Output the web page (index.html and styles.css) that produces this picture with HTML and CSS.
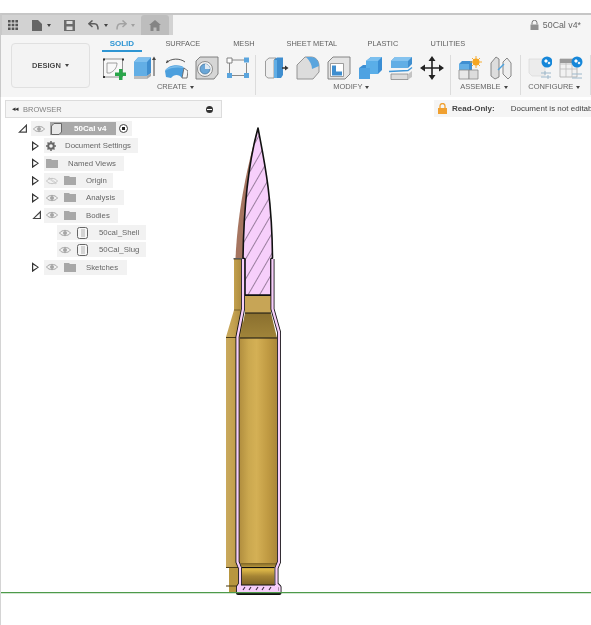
FILE: index.html
```html
<!DOCTYPE html>
<html lang="en">
<head>
<meta charset="utf-8">
<title>50Cal v4</title>
<link rel="stylesheet" href="styles.css">
</head>
<body>
<div class="app">
  <header class="topbar">
    <div class="qat">
      <svg class="qi grid" viewBox="0 0 10 10"><path d="M0 0h2.600v2.600H0zM3.700 0h2.600v2.600H3.700zM7.400 0H10v2.600H7.400zM0 3.700h2.600v2.600H0zM3.700 3.700h2.600v2.600H3.700zM7.400 3.700H10v2.600H7.400zM0 7.400h2.600V10H0zM3.700 7.400h2.600V10H3.700zM7.400 7.400H10V10H7.400z" fill="#555"/></svg>
      <svg class="qi file" viewBox="0 0 10 11"><path d="M0 0h6l4 4v7H0z" fill="#666"/></svg>
      <span class="caret dark file-caret"></span>
      <svg class="qi save" viewBox="0 0 11 11"><path d="M0 0h11v11H0z" fill="#6c6c6c"/><path d="M2.500 1h6v3h-6zM2.500 6.500h6V10h-6z" fill="#ddd"/></svg>
      <svg class="qi undo" viewBox="0 0 11 10"><path d="M4.500 0.500 0.800 3.800l3.700 3.200M1 3.800h5.500c2.500 0 3.500 2 3.500 5.700" fill="none" stroke="#5c5c5c" stroke-width="1.500"/></svg>
      <span class="caret dark undo-caret"></span>
      <svg class="qi redo" viewBox="0 0 11 10"><path d="M6.500 0.500l3.700 3.300L6.500 7M10 3.800H4.500C2 3.800 1 5.800 1 9.500" fill="none" stroke="#a2a2a2" stroke-width="1.500"/></svg>
      <span class="caret faint redo-caret"></span>
      <div class="home">
        <svg class="home-icon" viewBox="0 0 12 11"><path d="M6 0 0 5h1.500v6h3V7.500h3V11h3V5H12z" fill="#858585"/></svg>
      </div>
    </div>
    <div class="doc-tab">
      <svg class="lock" viewBox="0 0 9 10"><path d="M2 4.500V2.800a2.500 2.500 0 0 1 5 0v1.700" fill="none" stroke="#777"/><path d="M.5 4.500h8V10h-8z" fill="#909090"/></svg>
      <span class="doc-name">50Cal v4*</span>
    </div>
  </header>

  <section class="ribbon">
    <div class="design"><span>DESIGN</span><span class="caret dark"></span></div>
    <div class="panel">
      <nav class="tabs">
        <span class="tab active t40">SOLID</span>
        <span class="tab t82">SURFACE</span>
        <span class="tab t40">MESH</span>
        <span class="tab t96">SHEET METAL</span>
        <span class="tab t46">PLASTIC</span>
        <span class="tab t84">UTILITIES</span>
      </nav>
      <div class="groups">
        <div class="group g-create">
          <div class="tools">
            <svg class="tool" viewBox="0 0 24 24"><path d="M1.500 3h19v18h-19z" fill="#f8f8f8" stroke="#777" stroke-width=".8"/><path d="M5 7v10h3M5 7h10c0 5-3 8-7 10" fill="none" stroke="#888" stroke-width=".8"/><path d="M1 2.500h2v2H1zM20 2.500h2v2h-2zM1 20h2v2H1z" fill="#333"/><path d="M17 13h3.500v3.500H24v3.500h-3.500V24H17v-4h-4v-3.500h4z" fill="#2aa54a"/></svg>
            <svg class="tool" viewBox="0 0 24 24"><path d="M1 6 5 1.500h13V17l-4 3H1z" fill="#3f8ecf"/><path d="M1 6h13v14H1z" fill="#62aee5"/><path d="M1 6 5 1.500h13L14 6z" fill="#7fc0ee"/><path d="M1 20h13v3H1z" fill="#bdbdbd"/><path d="M14 20l4-3v3l-4 3z" fill="#a8a8a8"/><path d="M21 3v17" stroke="#444"/><path d="M21 .5l2 3.500h-4z" fill="#444"/></svg>
            <svg class="tool" viewBox="0 0 24 24"><path d="M1 15C4 8 18 8 20 12l-2 10c-3-4-8-4-11 0l-5-1z" fill="#4c9fdd"/><path d="M1 15C4 9 17 9 20 12c-5-1-14-1-19 3z" fill="#7cbdea"/><path d="M20 12l4 3-1 7-5 0z" fill="#f6f6f6" stroke="#555" stroke-width=".8"/><path d="M2 7C7 2 16 2 21 6" fill="none" stroke="#444" stroke-width=".9"/><path d="M2 7l1-3 2 2z" fill="#444"/></svg>
            <svg class="tool" viewBox="0 0 24 24"><path d="M1 5 5 1h18v17l-4 5H1z" fill="#d6d6d6" stroke="#777" stroke-width=".9"/><circle cx="10" cy="13" r="7.500" fill="#f2f2f2" stroke="#777" stroke-width=".8"/><circle cx="10" cy="13" r="5" fill="#6ba7d8" stroke="#3e6f96" stroke-width=".7"/><path d="M10 13V8a5 5 0 0 1 5 5z" fill="#dfe9f2"/></svg>
            <svg class="tool" viewBox="0 0 24 24"><path d="M6 4h12M3.500 7v10M6 19.500h12M20.500 7v10" stroke="#8a8a8a"/><path d="M1 2h5v5H1z" fill="#fff" stroke="#777" stroke-width=".9"/><path d="M18 1.500h5v5h-5zM1 17h5v5H1zM18 17h5v5h-5z" fill="#5aa5de"/></svg>
          </div>
          <div class="group-label">CREATE<span class="caret dark"></span></div>
        </div>
        <div class="group g-modify">
          <div class="tools">
            <svg class="tool" viewBox="0 0 24 24"><path d="M.5 5 4 2h7l-2 2v18H3l-2.500-2z" fill="#eee" stroke="#888" stroke-width=".8"/><path d="M9 4l3-2.500h6V19l-2 3H9z" fill="#3f8ecf"/><path d="M9 4h3v18H9z" fill="#62aee5"/><path d="M17 12h3" stroke="#333" stroke-width="1.500"/><path d="M20 9.500l3.500 2.500-3.500 2.500z" fill="#333"/></svg>
            <svg class="tool" viewBox="0 0 24 24"><path d="M1 23V9L9 1h6c5 0 8 4 8 9v6l-6 7z" fill="#dcdcdc" stroke="#8a8a8a" stroke-width=".9"/><path d="M10 1h5c5 0 8 4 8 9l-7 3c0-4-2-8-6-12z" fill="#5aa5de"/></svg>
            <svg class="tool" viewBox="0 0 24 24"><path d="M1 6 6 1h17v17l-5 5H1z" fill="#e4e4e4" stroke="#7a7a7a" stroke-width=".9"/><path d="M3.500 7.500h13v13h-13z" fill="#fff" stroke="#888" stroke-width=".8"/><path d="M5 9.500h4v6h6v4H5z" fill="#3f8ecf"/></svg>
            <svg class="tool" viewBox="0 0 24 24"><path d="M8 5l5-4h11v13l-4 4h-8v5H1V12l4-3h3z" fill="#3a8ed4"/><path d="M1 12h11v11H1z" fill="#4ea2e2"/><path d="M8 5h12v13h-8v-6H8z" fill="#5aaee8"/><path d="M8 5l5-4h11l-4 4z" fill="#7cc0ef"/></svg>
            <svg class="tool" viewBox="0 0 24 24"><path d="M2 5l4-4h17v7l-4 4H2z" fill="#3f8ecf"/><path d="M2 5h17v7H2z" fill="#62aee5"/><path d="M2 5l4-4h17l-4 4z" fill="#85c3ef"/><path d="M0 15.500 19 14.500l4-3" fill="none" stroke="#3f96d8" stroke-width="1.300"/><path d="M2 18h17v5.500H2z" fill="#dcdcdc" stroke="#888" stroke-width=".8"/><path d="M19 18l4-3v6l-4 2.500z" fill="#c4c4c4"/></svg>
            <svg class="tool" viewBox="0 0 24 24"><path d="M12 2v20M2 12h20" stroke="#222" stroke-width="1.600"/><path d="M12 0l3.500 5h-7zM12 24l-3.500-5h7zM0 12l5-3.500v7zM24 12l-5 3.500v-7z" fill="#222"/></svg>
          </div>
          <div class="group-label">MODIFY<span class="caret dark"></span></div>
        </div>
        <div class="group g-assemble">
          <div class="tools">
            <svg class="tool" viewBox="0 0 24 24"><path d="M1 8l3-3h10v9H1z" fill="#3f8fd2"/><path d="M1 8h10v6H1z" fill="#62aee5"/><path d="M1 14h10v9H1z" fill="#e8e8e8" stroke="#888" stroke-width=".8"/><path d="M11 14h9v9h-9z" fill="#dcdcdc" stroke="#888" stroke-width=".8"/><circle cx="18" cy="6" r="3.500" fill="#f5a623"/><path d="M18 0v12M12 6h12M14 2l8 8M22 2l-8 8" stroke="#f5a623" stroke-width=".9"/></svg>
            <svg class="tool" viewBox="0 0 24 24"><path d="M2 7 7 1l3 2v18l-4 2-4-3z" fill="#ddd" stroke="#7a7a7a" stroke-width=".9"/><path d="M14 6l4-4 4 5v13l-3 3-5-5z" fill="#eee" stroke="#7a7a7a" stroke-width=".9"/><path d="M9 14l6-6" stroke="#4da3e0" stroke-width="1.500"/></svg>
          </div>
          <div class="group-label">ASSEMBLE<span class="caret dark"></span></div>
        </div>
        <div class="group g-config">
          <div class="tools">
            <svg class="tool" viewBox="0 0 24 24"><path d="M1 3h16v17H4l-3-3z" fill="#ececec" stroke="#dadada" stroke-width=".7"/><path d="M13 17h10M13 21h10M17 15v4M20 19v4" stroke="#9db8cb"/><circle cx="19" cy="6" r="5.500" fill="#1687d9"/><path d="M18 3l2 2-2 2-2-2zM21 5.500l1.500 1.500-1.500 1.500-1.500-1.500z" fill="#fff"/></svg>
            <svg class="tool" viewBox="0 0 24 24"><path d="M1 3h17v18H1z" fill="#f2f2f2" stroke="#aaa" stroke-width=".8"/><path d="M1 8h17M1 13h17M7 3v18M13 3v18" stroke="#bbb" stroke-width=".8"/><path d="M1 3h15v4H1z" fill="#9a9a9a"/><path d="M13 18h10M13 22h10" stroke="#9db8cb"/><circle cx="18" cy="6" r="5.500" fill="#1687d9"/><path d="M17 3l2 2-2 2-2-2zM20 5.500l1.500 1.500-1.500 1.500-1.500-1.500z" fill="#fff"/></svg>
          </div>
          <div class="group-label">CONFIGURE<span class="caret dark"></span></div>
        </div>
      </div>
    </div>
  </section>

  <main class="canvas">
    <svg class="model" viewBox="0 0 591 625" aria-hidden="true">
      <defs>
        <linearGradient id="brass" x1="0" x2="1" y1="0" y2="0">
          <stop offset="0" stop-color="#b08d3e"/><stop offset=".25" stop-color="#cba84f"/><stop offset=".45" stop-color="#d4b055"/><stop offset=".75" stop-color="#c09a42"/><stop offset="1" stop-color="#a9853a"/>
        </linearGradient>
        <linearGradient id="outer" x1="0" x2="1" y1="0" y2="0">
          <stop offset="0" stop-color="#c9a95e"/><stop offset=".45" stop-color="#c4a14f"/><stop offset="1" stop-color="#a8883c"/>
        </linearGradient>
        <linearGradient id="shoulder" x1="0" x2="0" y1="0" y2="1">
          <stop offset="0" stop-color="#8a6f2e"/><stop offset="1" stop-color="#a0843a"/>
        </linearGradient>
        <linearGradient id="groove" x1="0" x2="0" y1="0" y2="1">
          <stop offset="0" stop-color="#7e6426"/><stop offset=".3" stop-color="#dcb748"/><stop offset=".6" stop-color="#a58434"/><stop offset="1" stop-color="#7e6426"/>
        </linearGradient>
        <pattern id="hatch" patternUnits="userSpaceOnUse" width="10" height="10" patternTransform="translate(2 0) rotate(30)">
          <rect width="10" height="10" fill="#f7cffb"/>
          <path d="M0 0V10" stroke="#4a3a50" stroke-width="1.100"/>
        </pattern>
      </defs>
      <path d="M258 128C249 160 238 205 235.500 258H243L258 140z" fill="#a67560"/>
      <path d="M234 259H243V338H237V568H226V337L234 310z" fill="url(#outer)"/>
      <path d="M229 568H240V586H229zM229 586H238V593H229z" fill="#b8963f"/>
      <path d="M233.500 258.800H243" stroke="#222" stroke-width="1.100"/>
      <path d="M234 310H240" stroke="#6f5a24" stroke-width=".9"/>
      <path d="M226 337.500H237M226 567.500H238M226 586H238" stroke="#4a3a14" stroke-width="1.100"/>
      <path d="M258 128C252 150 244 190 243 258L245 259V295H271V259L272.500 258C272 195 264 160 258 128z" fill="url(#hatch)" stroke="#111" stroke-width="1.600" stroke-linejoin="round"/>
      <path d="M245 295H271V313H245z" fill="#c7a556"/>
      <path d="M245 313H271L277 338H240z" fill="url(#shoulder)"/>
      <path d="M239 338H278V563H239z" fill="url(#brass)"/>
      <path d="M240 563H277L274.500 568V585H242V568z" fill="url(#groove)"/>
      <path d="M245 295.500H271M245 313H271M240 338H277M242 567.500H274.500" stroke="#111" stroke-width="1" fill="none"/>
      <path d="M243 259V309L237.500 337V562L240 568V584L238 587V593H279.500V587L276.500 584V568L279 562V332L272.500 309V259" fill="none" stroke="#111" stroke-width="4" stroke-linejoin="round"/>
      <path d="M243 259V309L237.500 337V562L240 568V584L238 587V592H279.500V587L276.500 584V568L279 562V332L272.500 309V259" fill="none" stroke="#f7cffb" stroke-width="2.300" stroke-linejoin="round"/>
      <path d="M239 585H278V592H239z" fill="#f7cffb"/>
      <path d="M241 585H275" stroke="#111" stroke-width="1.100"/>
      <path d="M243 590l2-3M249 590l2-3M256 590l2-3M262 590l2-3M269 590l2-3" stroke="#3b2a3e" stroke-width="1.100"/>
      <path d="M236.500 593.500H281" stroke="#111" stroke-width="1"/>
      <path d="M1 592.700H591" stroke="#4d9a4a" stroke-width="1.200"/>
    </svg>

    <div class="overlay-bar">
      <div class="browser-head">
        <span class="collapse">◂◂</span>
        <span class="browser-title">BROWSER</span>
        <span class="minus"></span>
      </div>
      <div class="readonly">
        <svg class="ro-lock" viewBox="0 0 9 11"><path d="M2 5V3a2.500 2.500 0 0 1 5 0v2" fill="none" stroke="#f0a030" stroke-width="1.300"/><path d="M0 5h9v6H0z" fill="#f0a030"/></svg>
        <b class="ro-title">Read-Only:</b>
        <span class="ro-text">Document is not editable</span>
      </div>
    </div>

    <ul class="tree">
      <li class="row root">
        <span class="tw open"></span>
        <span class="pill root-pill">
          <svg class="eye" viewBox="0 0 12 8"><path d="M.5 4C3 .5 9 .5 11.500 4 9 7.500 3 7.500.5 4z" fill="none" stroke="#a5a5a5"/><circle cx="6" cy="4" r="2" fill="#a5a5a5"/></svg>
          <span class="root-sel">
            <svg class="cube" viewBox="0 0 11 12"><path d="M.5 3 3 .5h7.500V9L8 11.500H.5z" fill="#e8e8e8" stroke="#666"/></svg>
            <b>50Cal v4</b>
          </span>
          <span class="radio"></span>
        </span>
      </li>
      <li class="row l1">
        <span class="tw closed"></span>
        <span class="pill docset">
          <svg class="gear" viewBox="0 0 10 10"><circle cx="5" cy="5" r="2.800" fill="none" stroke="#666" stroke-width="2"/><path d="M5 0v10M0 5h10M1.500 1.500l7 7M8.500 1.500l-7 7" stroke="#666" stroke-width="1.500" stroke-dasharray="1.800 6.400"/></svg>
          <span class="lbl">Document Settings</span>
        </span>
      </li>
      <li class="row l1">
        <span class="tw closed"></span>
        <span class="pill named">
          <svg class="folder" viewBox="0 0 12 9"><path d="M0 0h5l1 1h6v8H0z" fill="#a8a8a8"/></svg>
          <span class="lbl">Named Views</span>
        </span>
      </li>
      <li class="row l1">
        <span class="tw closed"></span>
        <span class="pill p69">
          <svg class="eye" viewBox="0 0 12 8"><path d="M.5 4C3 .5 9 .5 11.500 4 9 7.500 3 7.500.5 4z" fill="none" stroke="#c4c4c4"/><path d="M2 1l8 6M3 .5l8 6" stroke="#c4c4c4" stroke-width=".7"/></svg>
          <svg class="folder" viewBox="0 0 12 9"><path d="M0 0h5l1 1h6v8H0z" fill="#a8a8a8"/></svg>
          <span class="lbl">Origin</span>
        </span>
      </li>
      <li class="row l1">
        <span class="tw closed"></span>
        <span class="pill p80">
          <svg class="eye" viewBox="0 0 12 8"><path d="M.5 4C3 .5 9 .5 11.500 4 9 7.500 3 7.500.5 4z" fill="none" stroke="#a5a5a5"/><circle cx="6" cy="4" r="2" fill="#a5a5a5"/></svg>
          <svg class="folder" viewBox="0 0 12 9"><path d="M0 0h5l1 1h6v8H0z" fill="#a8a8a8"/></svg>
          <span class="lbl">Analysis</span>
        </span>
      </li>
      <li class="row l1">
        <span class="tw open small"></span>
        <span class="pill p74">
          <svg class="eye" viewBox="0 0 12 8"><path d="M.5 4C3 .5 9 .5 11.500 4 9 7.500 3 7.500.5 4z" fill="none" stroke="#a5a5a5"/><circle cx="6" cy="4" r="2" fill="#a5a5a5"/></svg>
          <svg class="folder" viewBox="0 0 12 9"><path d="M0 0h5l1 1h6v8H0z" fill="#a8a8a8"/></svg>
          <span class="lbl">Bodies</span>
        </span>
      </li>
      <li class="row l2">
        <span class="pill p89">
          <svg class="eye" viewBox="0 0 12 8"><path d="M.5 4C3 .5 9 .5 11.500 4 9 7.500 3 7.500.5 4z" fill="none" stroke="#a5a5a5"/><circle cx="6" cy="4" r="2" fill="#a5a5a5"/></svg>
          <svg class="body-ic" viewBox="0 0 11 12"><rect x=".5" y=".5" width="10" height="11" rx="2" fill="#f6f6f6" stroke="#666"/><rect x="4" y="2" width="4" height="8" fill="#d4d4d4"/></svg>
          <span class="lbl">50cal_Shell</span>
        </span>
      </li>
      <li class="row l2">
        <span class="pill p89">
          <svg class="eye" viewBox="0 0 12 8"><path d="M.5 4C3 .5 9 .5 11.500 4 9 7.500 3 7.500.5 4z" fill="none" stroke="#a5a5a5"/><circle cx="6" cy="4" r="2" fill="#a5a5a5"/></svg>
          <svg class="body-ic" viewBox="0 0 11 12"><rect x=".5" y=".5" width="10" height="11" rx="2" fill="#f6f6f6" stroke="#666"/><rect x="4" y="2" width="4" height="8" fill="#d4d4d4"/></svg>
          <span class="lbl">50Cal_Slug</span>
        </span>
      </li>
      <li class="row l1">
        <span class="tw closed"></span>
        <span class="pill p83">
          <svg class="eye" viewBox="0 0 12 8"><path d="M.5 4C3 .5 9 .5 11.500 4 9 7.500 3 7.500.5 4z" fill="none" stroke="#a5a5a5"/><circle cx="6" cy="4" r="2" fill="#a5a5a5"/></svg>
          <svg class="folder" viewBox="0 0 12 9"><path d="M0 0h5l1 1h6v8H0z" fill="#a8a8a8"/></svg>
          <span class="lbl">Sketches</span>
        </span>
      </li>
    </ul>
  </main>
</div>
</body>
</html>
```

FILE: styles.css
```css
* { box-sizing: border-box; }
html, body { margin: 0; height: 100%; background: #fff; overflow: hidden; }
body { font-family: "Liberation Sans", Arial, sans-serif; color: #555; }

.app {
  width: 591px;
  height: 625px;
  padding-top: 13px;
  display: flex;
  flex-direction: column;
  filter: blur(.35px);
}

.topbar {
  height: 22px;
  display: flex;
  border-top: 2px solid #c6c6c6;
  border-left: 2px solid #c9c9c9;
  background: #f5f5f5;
}
.qat {
  width: 171px;
  display: flex;
  align-items: center;
  background: #d2d2d2;
  position: relative;
}
.qi { display: block; flex: none; }
.grid { width: 10px; height: 10px; margin-left: 6px; }
.file { width: 10px; height: 11px; margin-left: 14px; }
.file-caret { margin-left: 5px; }
.save { width: 11px; height: 11px; margin-left: 13px; }
.undo { width: 11px; height: 10px; margin-left: 13px; }
.undo-caret { margin-left: 5px; }
.redo { width: 11px; height: 10px; margin-left: 8px; }
.redo-caret { margin-left: 4px; }
.home {
  width: 28px;
  height: 20px;
  margin-left: 6px;
  background: #bdbdbd;
  border-radius: 3px 3px 0 0;
  display: flex;
  align-items: center;
  justify-content: center;
  align-self: flex-end;
}
.home-icon { width: 12px; height: 11px; }

.doc-tab {
  flex: 1;
  display: flex;
  align-items: center;
  justify-content: flex-end;
  padding-right: 10px;
  font-size: 8.800px;
  color: #666;
}
.lock { width: 9px; height: 10px; margin-right: 4px; }

.caret {
  display: inline-block;
  width: 0;
  height: 0;
  border-left: 2.500px solid transparent;
  border-right: 2.500px solid transparent;
  border-top: 3px solid #444;
  flex: none;
}
.caret.dark { border-top-color: #444; }
.caret.faint { border-top-color: #a0a0a0; }

.ribbon {
  height: 62px;
  flex: none;
  display: flex;
  background: #f5f5f5;
  border-left: 1px solid #c9c9c9;
}
.design {
  width: 79px;
  height: 45px;
  margin: 8px 0 0 10px;
  background: #f3f3f3;
  border: 1px solid #e0e0e0;
  border-radius: 4px;
  display: flex;
  align-items: center;
  justify-content: center;
  gap: 4px;
  font-size: 7.500px;
  font-weight: bold;
  color: #4a4a4a;
}
.panel { margin-left: 12px; width: 490px; display: flex; flex-direction: column; }
.tabs { display: flex; height: 17px; padding-top: 4px; }
.tab { font-size: 7.400px; line-height: 9px; height: 13px; text-align: center; color: #5f5f5f; flex: none; }
.tab.active { color: #2e95d3; font-weight: bold; font-size: 8px; border-bottom: 2px solid #2e95d3; }
.t40 { width: 40px; }
.t82 { width: 82px; }
.t96 { width: 96px; }
.t46 { width: 46px; }
.t84 { width: 84px; }

.groups { display: flex; height: 45px; padding-top: 3px; }
.group {
  display: flex;
  flex-direction: column;
  align-items: flex-start;
  border-right: 1px solid #dcdcdc;
  height: 40px;
}
.tools { display: flex; gap: 7px; height: 24px; margin-top: 1px; }
.tool { width: 24px; height: 24px; display: block; flex: none; }
.group-label {
  align-self: stretch;
  font-size: 7.500px;
  line-height: 10px;
  margin-top: 2px;
  display: flex;
  align-items: center;
  justify-content: center;
  gap: 3px;
  color: #666;
}
.g-create { width: 154px; }
.g-create .group-label { padding-right: 6px; }
.g-modify { width: 195px; padding-left: 9px; }
.g-modify .group-label { padding-right: 12px; }
.g-assemble { width: 70px; padding-left: 7px; }
.g-assemble .group-label { padding-right: 10px; }
.g-config { width: 70px; padding-left: 7px; }
.g-config .group-label { padding-right: 9px; }

.canvas { position: relative; flex: 1; background: #fff; border-left: 1px solid #d4d4d4; }
.model { position: absolute; left: -1px; top: -97px; width: 591px; height: 625px; }

.overlay-bar { position: relative; display: flex; justify-content: space-between; margin-top: 3px; padding-left: 4px; }
.browser-head {
  width: 217px;
  height: 18px;
  display: flex;
  align-items: center;
  background: #f5f5f5;
  border: 1px solid #dcdcdc;
  font-size: 7.500px;
  color: #808080;
}
.collapse { width: 17px; text-align: center; font-size: 7px; color: #333; letter-spacing: -1px; }
.browser-title { flex: 1; }
.minus {
  width: 7px;
  height: 7px;
  margin-right: 8px;
  border-radius: 50%;
  background: #333;
  position: relative;
}
.minus::after { content: ""; position: absolute; left: 1px; right: 1px; top: 3px; height: 1px; background: #fff; }

.readonly {
  width: 157px;
  height: 17px;
  display: flex;
  align-items: center;
  background: #f5f5f5;
  font-size: 8px;
  white-space: nowrap;
  overflow: hidden;
  padding-left: 4px;
  color: #444;
}
.ro-lock { width: 9px; height: 11px; flex: none; }
.ro-title { margin-left: 5px; }
.ro-text { margin-left: 16px; }

.tree { position: relative; list-style: none; margin: 2px 0 0; padding: 0; font-size: 7.800px; color: #666; }
.row { height: 17.330px; display: flex; align-items: center; white-space: nowrap; }
.root { padding-left: 16px; }
.l1 { padding-left: 30px; }
.l2 { padding-left: 56px; }
.tw { width: 13px; flex: none; height: 10px; position: relative; }
.tw.closed::before {
  content: "";
  position: absolute;
  left: 1px;
  top: 0;
  width: 7px;
  height: 10px;
  background: #333;
  clip-path: polygon(0 0, 100% 50%, 0 100%, 0 0, 1.200px 2.500px, 1.200px 7.500px, 5.500px 5px, 1.200px 2.500px);
}
.tw.open::before {
  content: "";
  position: absolute;
  left: 1px;
  top: 0;
  width: 9px;
  height: 9px;
  background: #444;
  clip-path: polygon(100% 0, 100% 100%, 0 100%, 100% 0, 7.800px 3px, 2.800px 7.800px, 7.800px 7.800px, 7.800px 3px);
}
.root .tw { width: 14px; }
.pill {
  height: 15px;
  background: #f2f2f2;
  display: flex;
  align-items: center;
  flex: none;
}
.eye { width: 12px; height: 8px; margin-left: 2px; flex: none; }
.folder { width: 12px; height: 9px; flex: none; }
.gear { width: 10px; height: 10px; margin-left: 2px; flex: none; }
.cube { width: 11px; height: 12px; margin-left: 1px; }
.body-ic { width: 11px; height: 12px; margin-left: 6px; flex: none; }
.lbl { display: block; }

.root-pill { width: 101px; }
.root-sel {
  width: 66px;
  height: 13px;
  margin-left: 5px;
  background: #a9a9a9;
  display: flex;
  align-items: center;
  color: #fff;
}
.root-sel b { margin-left: 12px; font-size: 8px; }
.radio {
  width: 9px;
  height: 9px;
  margin-left: 3px;
  border: 1px solid #444;
  border-radius: 50%;
  background: radial-gradient(circle, #222 0 1.500px, #fff 2px);
  flex: none;
}
.docset { width: 94px; }
.docset .lbl { margin-left: 9px; }
.named { width: 80px; padding-left: 2px; }
.named .lbl { margin-left: 10px; }
.p69 { width: 69px; }
.p80 { width: 80px; }
.p74 { width: 74px; }
.p83 { width: 83px; }
.p69 .folder, .p80 .folder, .p74 .folder, .p83 .folder { margin-left: 6px; }
.p69 .lbl, .p80 .lbl, .p74 .lbl, .p83 .lbl { margin-left: 10px; }
.p89 { width: 89px; }
.p89 .lbl { margin-left: 11px; }
```
